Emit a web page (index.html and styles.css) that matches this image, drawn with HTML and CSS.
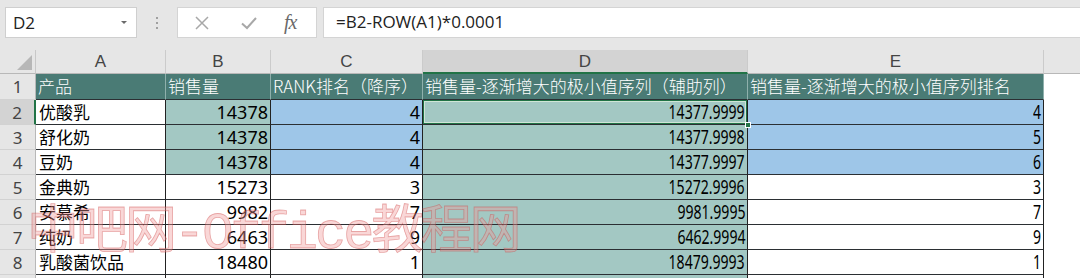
FILE: index.html
```html
<!DOCTYPE html>
<html lang="zh">
<head>
<meta charset="utf-8">
<link rel="stylesheet" href="styles.css">
</head>
<body>
<div class="app">
  <div class="fbar">
    <div class="namebox"><span class="nb-text">D2</span><span class="nb-arrow"></span></div>
    <div class="dots"><i></i><i></i><i></i></div>
    <div class="fxbox">
      <svg class="ic ic-x" width="16" height="16" viewBox="0 0 16 16"><path d="M2 2 L14 14 M14 2 L2 14" stroke="#a8a8a8" stroke-width="1.5" fill="none"/></svg>
      <svg class="ic ic-check" width="18" height="16" viewBox="0 0 18 16"><path d="M2 8.5 L7 13 L16 3" stroke="#a8a8a8" stroke-width="2" fill="none"/></svg>
      <span class="fx">fx</span>
    </div>
    <div class="finput">=B2-ROW(A1)*0.0001</div>
  </div>

  <div class="sheet">
    <div class="corner"><span class="tri"></span></div>
    <div class="ch">A</div>
    <div class="ch">B</div>
    <div class="ch">C</div>
    <div class="ch sel">D</div>
    <div class="ch">E</div>
    <div class="ch rest"></div>

    <div class="rh">1</div>
    <div class="c hd">产品</div>
    <div class="c hd">销售量</div>
    <div class="c hd">RANK排名（降序）</div>
    <div class="c hd">销售量-逐渐增大的极小值序列（辅助列）</div>
    <div class="c hd">销售量-逐渐增大的极小值序列排名</div>
    <div class="blank"></div>

    <div class="rh sel">2</div>
    <div class="c t">优酸乳</div>
    <div class="c n teal">14378</div>
    <div class="c n blue">4</div>
    <div class="c n teal cur"><span class="nr">14377.9999</span><span class="handle"></span></div>
    <div class="c n blue"><span class="nr">4</span></div>
    <div class="blank"></div>

    <div class="rh">3</div>
    <div class="c t">舒化奶</div>
    <div class="c n teal">14378</div>
    <div class="c n blue">4</div>
    <div class="c n teal"><span class="nr">14377.9998</span></div>
    <div class="c n blue"><span class="nr">5</span></div>
    <div class="blank"></div>

    <div class="rh">4</div>
    <div class="c t">豆奶</div>
    <div class="c n teal">14378</div>
    <div class="c n blue">4</div>
    <div class="c n teal"><span class="nr">14377.9997</span></div>
    <div class="c n blue"><span class="nr">6</span></div>
    <div class="blank"></div>

    <div class="rh">5</div>
    <div class="c t">金典奶</div>
    <div class="c n">15273</div>
    <div class="c n">3</div>
    <div class="c n teal"><span class="nr">15272.9996</span></div>
    <div class="c n"><span class="nr">3</span></div>
    <div class="blank"></div>

    <div class="rh">6</div>
    <div class="c t">安慕希</div>
    <div class="c n">9982</div>
    <div class="c n">7</div>
    <div class="c n teal"><span class="nr">9981.9995</span></div>
    <div class="c n"><span class="nr">7</span></div>
    <div class="blank"></div>

    <div class="rh">7</div>
    <div class="c t">纯奶</div>
    <div class="c n">6463</div>
    <div class="c n">9</div>
    <div class="c n teal"><span class="nr">6462.9994</span></div>
    <div class="c n"><span class="nr">9</span></div>
    <div class="blank"></div>

    <div class="rh">8</div>
    <div class="c t">乳酸菌饮品</div>
    <div class="c n">18480</div>
    <div class="c n">1</div>
    <div class="c n teal"><span class="nr">18479.9993</span></div>
    <div class="c n"><span class="nr">1</span></div>
    <div class="blank"></div>

    <div class="rh"></div>
    <div class="c"></div>
    <div class="c"></div>
    <div class="c"></div>
    <div class="c teal"></div>
    <div class="c"></div>
    <div class="blank"></div>

    <div class="watermark">中吧网-Office教程网</div>
  </div>
</div>
</body>
</html>
```

FILE: styles.css
```css
* { box-sizing: border-box; }
html, body { margin: 0; padding: 0; }
body {
  width: 1080px;
  height: 278px;
  overflow: hidden;
  background: #e6e6e6;
  font-family: "Noto Sans", "Noto Sans CJK SC", sans-serif;
  color: #000;
}
.app { width: 1080px; height: 278px; overflow: hidden; }

/* formula bar */
.fbar {
  height: 50px;
  display: flex;
  align-items: flex-start;
  padding-top: 7px;
  padding-left: 5px;
}
.namebox {
  width: 132px;
  height: 31px;
  background: #fff;
  border: 1px solid #cfcfcf;
  display: flex;
  align-items: center;
  justify-content: space-between;
  padding: 0 9px 0 7px;
}
.nb-text { font-family: "Open Sans", "Noto Sans", sans-serif; font-size: 17px; color: #222; }
.nb-arrow {
  width: 0; height: 0;
  border-left: 3.5px solid transparent;
  border-right: 3.5px solid transparent;
  border-top: 3.5px solid #6a6a6a;
}
.dots {
  width: 40px;
  height: 31px;
  display: flex;
  flex-direction: column;
  align-items: center;
  justify-content: center;
  gap: 3px;
}
.dots i { display: block; width: 2px; height: 2px; background: #a0a0a0; }
.fxbox {
  width: 140px;
  height: 31px;
  background: #fff;
  border: 1px solid #d4d4d4;
  display: flex;
  align-items: center;
  padding-left: 16px;
}
.ic-x { margin-right: 30px; }
.ic-check { margin-right: 26px; }
.fx {
  font-family: "Liberation Serif", serif;
  font-style: italic;
  font-size: 20px;
  color: #6a6a6a;
  letter-spacing: -1px;
}
.finput {
  margin-left: 6px;
  flex: 1;
  height: 31px;
  background: #fff;
  border: 1px solid #d4d4d4;
  border-right: none;
  font-family: "Open Sans", "Noto Sans", sans-serif;
  font-size: 17px;
  color: #222;
  padding-left: 12px;
  line-height: 28px;
}

/* sheet */
.sheet {
  position: relative;
  display: grid;
  grid-template-columns: 36px 130px 105px 152px 325px 296px 1fr;
  grid-template-rows: 24px 26px repeat(7, 25px) 25px;
  background: #fff;
}
.corner {
  background: #e6e6e6;
  border-right: 1px solid #c8c8c8;
  border-bottom: 1px solid #b8b8b8;
  position: relative;
}
.tri {
  position: absolute;
  right: 3px;
  bottom: 3px;
  width: 0; height: 0;
  border-left: 15px solid transparent;
  border-bottom: 15px solid #b7b7b7;
}
.ch {
  background: #e6e6e6;
  border-right: 1px solid #cbcbcb;
  border-bottom: 1px solid #b8b8b8;
  text-align: center;
  font-family: "Liberation Sans", sans-serif;
  font-size: 17px;
  line-height: 24px;
  color: #444;
}
.ch.sel { background: #d3d3d3; border-bottom: 2px solid #217346; color: #444; }
.ch.rest { border-right: none; }
.rh {
  background: #e6e6e6;
  border-right: 1px solid #b8b8b8;
  border-bottom: 1px solid #d2d2d2;
  text-align: center;
  font-family: "Noto Sans", sans-serif;
  font-size: 17px;
  color: #444;
  line-height: 25px;
}
.rh.sel { background: #d3d3d3; border-right: 2px solid #217346; }
.c {
  border-right: 1px solid #222;
  border-bottom: 1px solid #2b2f33;
  font-size: 17px;
  line-height: 24px;
  white-space: nowrap;
  overflow: hidden;
  position: relative;
}
.hd {
  background: #4a7b75;
  color: #fff;
  padding-left: 2px;
  border-right: 1px solid #8fb0ac;
  font-family: "Noto Sans CJK SC", sans-serif;
  font-weight: 300;
  overflow: visible;
}
.t { font-family: "Noto Sans CJK SC", sans-serif; padding-left: 3px; }
.n {
  text-align: right;
  padding-right: 2px;
  font-family: "Noto Sans", sans-serif;
  font-size: 18px;
  overflow: visible;
}
.nr {
  display: inline-block;
  transform: scaleX(0.72);
  transform-origin: right center;
  font-size: 19.5px;
  line-height: 24px;
  vertical-align: top;
}
.teal { background: #a3c8c3; }
.blue { background: #9ec6e8; }
.blank { background: #fff; }
.cur { box-shadow: inset 0 0 0 1px #217346, inset 0 0 0 2px #cfe6d6; }
.handle {
  position: absolute;
  right: -4px;
  bottom: -4px;
  width: 6px;
  height: 6px;
  background: #217346;
  border: 1px solid #fff;
  z-index: 3;
}
.watermark {
  position: absolute;
  left: 27px;
  top: 155px;
  font-family: "Liberation Mono", "Noto Sans CJK SC", monospace;
  font-size: 52px;
  line-height: 60px;
  color: rgba(238, 150, 150, 0.38);
  -webkit-text-stroke: 0.8px rgba(205, 70, 70, 0.42);
  letter-spacing: -3px;
  white-space: nowrap;
  pointer-events: none;
  z-index: 5;
}
```
